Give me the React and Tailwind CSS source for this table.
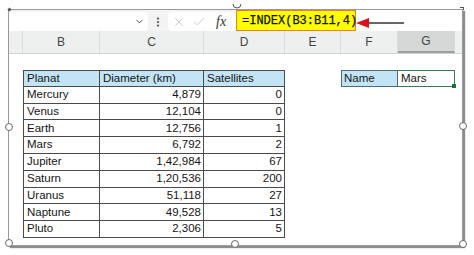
import React from 'react'
import { ChevronDown, EllipsisVertical, X, Check } from 'lucide-react'

const COLS = [
  { key: 'row', w: 14, label: '' },
  { key: 'B', w: 77, label: 'B' },
  { key: 'C', w: 104, label: 'C' },
  { key: 'D', w: 81, label: 'D' },
  { key: 'E', w: 56, label: 'E' },
  { key: 'F', w: 57, label: 'F' },
  { key: 'G', w: 57, label: 'G' },
]

const PLANETS = [
  ['Mercury', '4,879', '0'],
  ['Venus', '12,104', '0'],
  ['Earth', '12,756', '1'],
  ['Mars', '6,792', '2'],
  ['Jupiter', '1,42,984', '67'],
  ['Saturn', '1,20,536', '200'],
  ['Uranus', '51,118', '27'],
  ['Naptune', '49,528', '13'],
  ['Pluto', '2,306', '5'],
]

function FormulaBar() {
  return (
    <div className="flex h-[21px] bg-[#f3f3f3] shrink-0">
      <div className="mt-[2px] w-[139px] h-[19px] bg-white rounded-r-[4px] flex items-center justify-end pr-[3px]">
        <ChevronDown size={11} strokeWidth={2} className="text-[#444]" />
      </div>
      <div className="w-[20px] flex items-center justify-center pt-[2px]">
        <EllipsisVertical size={12} strokeWidth={2.5} className="text-[#555]" />
      </div>
      <div className="mt-[2px] w-[67px] h-[19px] bg-white rounded-l-[4px] flex items-center pl-[4px]">
        <X size={14} strokeWidth={1.2} className="text-[#b8b8b8]" />
        <Check size={14} strokeWidth={1.2} className="text-[#b8b8b8] ml-[6px]" />
        <span className="ml-[10px] text-[14px] italic text-[#333] font-['Liberation_Serif',serif] leading-none">fx</span>
      </div>
      <div className="flex-1 bg-white flex items-stretch pl-[1px]">
        <div className="w-[120px] bg-[#ffff00] border-[1.5px] border-[#ef7d2c] flex items-center pl-[5px] text-[12px] text-[#111] font-['Liberation_Mono',monospace] [-webkit-text-stroke:0.25px_#111]">
          =INDEX(B3:B11,4)
        </div>
        <svg width="50" height="21" viewBox="0 0 50 21" className="-ml-[1px]">
          <polygon points="1,13 14,8 14,18" fill="#d8141a" />
          <line x1="14" y1="13" x2="49" y2="13" stroke="#333" strokeWidth="1.3" />
        </svg>
      </div>
    </div>
  )
}

function ColumnHeaders() {
  return (
    <div className="flex h-[23px] bg-[#eef0f0] border-b border-[#d2d4d4] shrink-0">
      {COLS.map(c => (
        <div
          key={c.key}
          style={{ width: c.w }}
          className={`flex items-center justify-center text-[12px] text-[#444] border-r border-[#dadcdc] ${
            c.key === 'G' ? 'bg-[#d6d8d8] border-b-2 border-b-[#9aa0a0]' : ''
          }`}
        >
          {c.label}
        </div>
      ))}
      <div className="flex-1" />
    </div>
  )
}

function Cell({ w, className = '', children }) {
  return (
    <div style={{ width: w }} className={`shrink-0 flex items-center ${className}`}>
      {children}
    </div>
  )
}

function SheetRow({ r }) {
  const header = r === 0
  const data = header ? ['Planat', 'Diameter (km)', 'Satellites'] : PLANETS[r - 1]
  const bg = header ? 'bg-[#c3e4f5]' : 'bg-white'
  const top = header ? 'border-t' : ''
  return (
    <div className="flex h-[16.8px]">
      <Cell w={14} />
      <Cell w={77} className={`${bg} ${top} border-l border-r border-b border-[#4a4a4a] pl-[3px]`}>
        {data[0]}
      </Cell>
      <Cell w={104} className={`${bg} ${top} border-r border-b border-[#4a4a4a] ${header ? 'pl-[3px]' : 'justify-end pr-[2px]'}`}>
        {data[1]}
      </Cell>
      <Cell w={81} className={`${bg} ${top} border-r border-b border-[#4a4a4a] ${header ? 'pl-[3px]' : 'justify-end pr-[2px]'}`}>
        {data[2]}
      </Cell>
      <Cell w={56} />
      {header ? (
        <>
          <Cell w={57} className="bg-[#c3e4f5] border border-[#4f6d70] pl-[2px]">Name</Cell>
          <Cell w={57} className="relative bg-white border-[1.5px] border-l-0 border-[#3a7a5a] pl-[3px]">
            Mars
            <span className="absolute -right-[2px] -bottom-[2px] w-[4px] h-[4px] bg-[#1e6e45]" />
          </Cell>
        </>
      ) : null}
    </div>
  )
}

function Handle({ className }) {
  return (
    <span className={`absolute w-[8px] h-[8px] rounded-full bg-white border border-[#6a6a6a] ${className}`} />
  )
}

export default function App() {
  return (
    <div className="relative w-[474px] h-[255px] bg-white overflow-hidden font-['Liberation_Sans',Arial,sans-serif]">
      <div className="absolute left-[8px] top-[9px] w-[455px] h-[237px] border border-[#9a9a9a] shadow-[2px_2px_1px_rgba(0,0,0,0.45)] bg-white flex flex-col overflow-hidden">
        <FormulaBar />
        <ColumnHeaders />
        <div className="flex flex-col text-[11.5px] text-[#141414] leading-none">
          <div className="h-[16px]" />
          {Array.from({ length: 10 }, (_, r) => (
            <SheetRow key={r} r={r} />
          ))}
        </div>
      </div>

      {/* selection handles of the picture */}
      <svg className="absolute left-[232px] top-[2px]" width="10" height="8" viewBox="0 0 10 8">
        <path d="M1 2 A4 4 0 0 0 9 2" fill="none" stroke="#555" strokeWidth="1" />
      </svg>
      <span className="absolute left-[8px] top-[8px] w-[3px] h-[3px] bg-[#555] rotate-45" />
      <span className="absolute left-[460px] top-[7px] w-[4px] h-[3px] border-t border-r border-[#555]" />
      <Handle className="left-[5px] top-[123px]" />
      <Handle className="left-[459px] top-[122px]" />
      <Handle className="left-[5px] top-[239px]" />
      <Handle className="left-[231px] top-[240px]" />
      <Handle className="left-[459px] top-[240px]" />
    </div>
  )
}
